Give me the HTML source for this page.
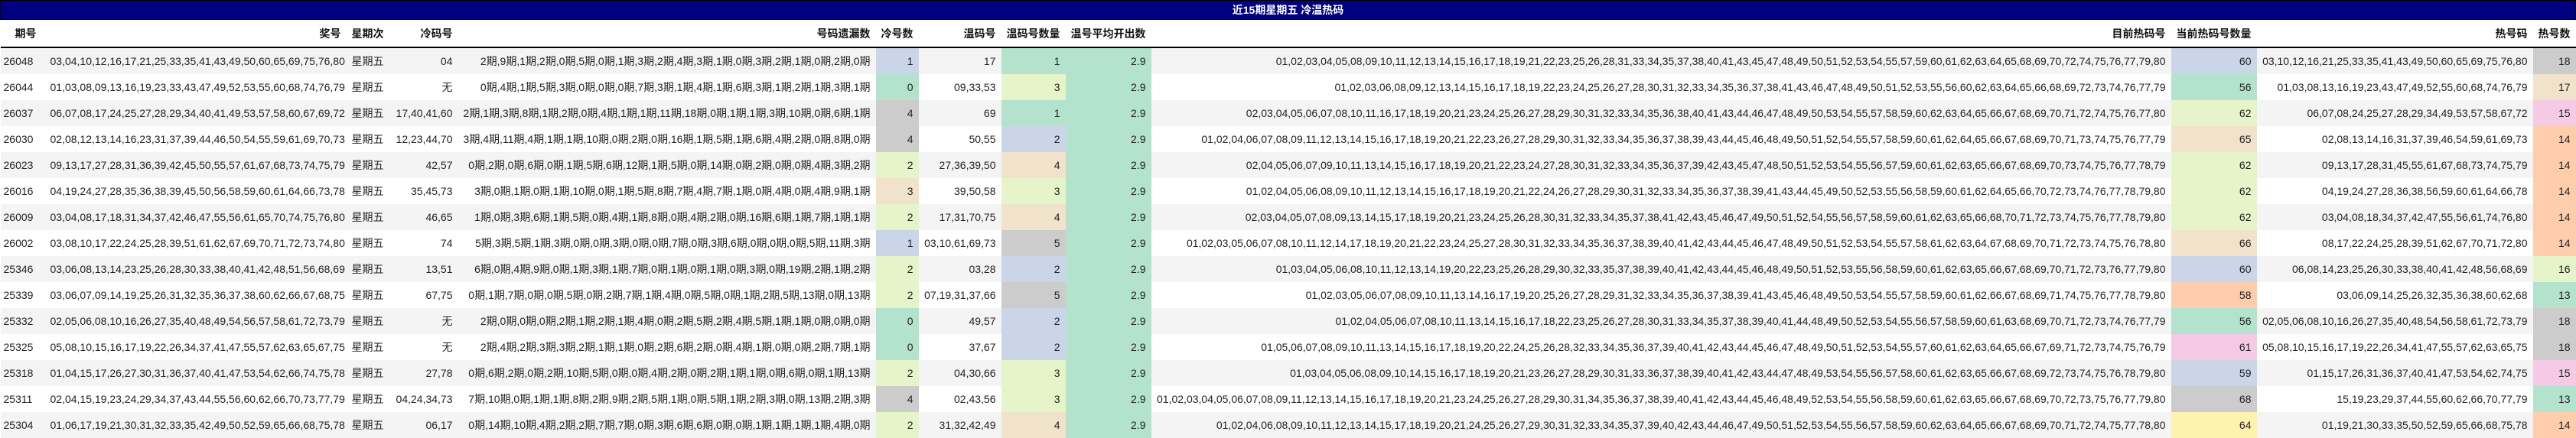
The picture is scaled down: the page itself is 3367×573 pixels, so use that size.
<!DOCTYPE html>
<html><head><meta charset="utf-8">
<style>
html,body{margin:0;padding:0;background:#fff;}
body{width:3367px;height:573px;overflow:hidden;font-family:"Liberation Sans","Noto Sans CJK SC",sans-serif;font-size:14px;color:#222;}
table{border-collapse:collapse;table-layout:fixed;width:3366px;}
td,th{padding:0 7px;white-space:nowrap;overflow:hidden;text-align:right;}
td:nth-child(4),th:nth-child(4){padding-left:0;padding-right:6px;overflow:visible;}
.title td{background:#000080;color:#fff;font-weight:bold;text-align:center;height:24px;border:1px solid #000;padding:0;}
.hd th{height:35px;font-weight:bold;color:#111;border-bottom:2px solid #000;}
tbody tr td{height:34px;}
tbody tr:nth-child(odd) td{background:#f4f4f4;}
td.l,th.l{text-align:left;}
td.c1{padding-left:4px;}
.G{background:#b3e2cd!important}.O{background:#fdcdac!important}.B{background:#cbd5e8!important}.P{background:#f4cae4!important}
.Y{background:#e6f5c9!important}.Z{background:#fff2ae!important}.E{background:#f1e2cc!important}.K{background:#cccccc!important}
</style></head><body>
<table>
<colgroup><col style="width:58px"><col style="width:394px"><col style="width:65px"><col style="width:80px"><col style="width:547px"><col style="width:56px"><col style="width:108px"><col style="width:84px"><col style="width:112px"><col style="width:1333px"><col style="width:112px"><col style="width:361px"><col style="width:56px"></colgroup>
<thead>
<tr class="title"><td colspan="13">近15期星期五 冷温热码</td></tr>
<tr class="hd"><th class="l" style="padding-left:19px">期号</th><th>奖号</th><th class="l">星期次</th><th>冷码号</th><th>号码遗漏数</th><th class="l">冷号数</th><th>温码号</th><th>温码号数量</th><th>温号平均开出数</th><th>目前热码号</th><th>当前热码号数量</th><th>热号码</th><th>热号数</th></tr>
</thead>
<tbody>
<tr><td class="l c1">26048</td><td>03,04,10,12,16,17,21,25,33,35,41,43,49,50,60,65,69,75,76,80</td><td class="l">星期五</td><td>04</td><td>2期,9期,1期,2期,0期,5期,0期,1期,3期,2期,4期,3期,1期,0期,3期,2期,1期,0期,2期,0期</td><td class="B">1</td><td>17</td><td class="G">1</td><td class="G">2.9</td><td>01,02,03,04,05,08,09,10,11,12,13,14,15,16,17,18,19,21,22,23,25,26,28,31,33,34,35,37,38,40,41,43,45,47,48,49,50,51,52,53,54,55,57,59,60,61,62,63,64,65,68,69,70,72,74,75,76,77,79,80</td><td class="B">60</td><td>03,10,12,16,21,25,33,35,41,43,49,50,60,65,69,75,76,80</td><td class="K">18</td></tr>
<tr><td class="l c1">26044</td><td>01,03,08,09,13,16,19,23,33,43,47,49,52,53,55,60,68,74,76,79</td><td class="l">星期五</td><td>无</td><td>0期,4期,1期,5期,3期,0期,0期,0期,7期,3期,1期,4期,1期,6期,3期,1期,2期,1期,3期,1期</td><td class="G">0</td><td>09,33,53</td><td class="Y">3</td><td class="G">2.9</td><td>01,02,03,06,08,09,12,13,14,15,16,17,18,19,22,23,24,25,26,27,28,30,31,32,33,34,35,36,37,38,41,43,46,47,48,49,50,51,52,53,55,56,60,62,63,64,65,66,68,69,72,73,74,76,77,79</td><td class="G">56</td><td>01,03,08,13,16,19,23,43,47,49,52,55,60,68,74,76,79</td><td class="E">17</td></tr>
<tr><td class="l c1">26037</td><td>06,07,08,17,24,25,27,28,29,34,40,41,49,53,57,58,60,67,69,72</td><td class="l">星期五</td><td>17,40,41,60</td><td>2期,1期,3期,8期,1期,2期,0期,4期,1期,1期,11期,18期,0期,1期,1期,3期,10期,0期,6期,1期</td><td class="K">4</td><td>69</td><td class="G">1</td><td class="G">2.9</td><td>02,03,04,05,06,07,08,10,11,16,17,18,19,20,21,23,24,25,26,27,28,29,30,31,32,33,34,35,36,38,40,41,43,44,46,47,48,49,50,53,54,55,57,58,59,60,62,63,64,65,66,67,68,69,70,71,72,74,75,76,77,80</td><td class="Y">62</td><td>06,07,08,24,25,27,28,29,34,49,53,57,58,67,72</td><td class="P">15</td></tr>
<tr><td class="l c1">26030</td><td>02,08,12,13,14,16,23,31,37,39,44,46,50,54,55,59,61,69,70,73</td><td class="l">星期五</td><td>12,23,44,70</td><td>3期,4期,11期,4期,1期,1期,10期,0期,2期,0期,16期,1期,5期,1期,6期,4期,2期,0期,8期,0期</td><td class="K">4</td><td>50,55</td><td class="B">2</td><td class="G">2.9</td><td>01,02,04,06,07,08,09,11,12,13,14,15,16,17,18,19,20,21,22,23,26,27,28,29,30,31,32,33,34,35,36,37,38,39,43,44,45,46,48,49,50,51,52,54,55,57,58,59,60,61,62,64,65,66,67,68,69,70,71,73,74,75,76,77,79</td><td class="E">65</td><td>02,08,13,14,16,31,37,39,46,54,59,61,69,73</td><td class="O">14</td></tr>
<tr><td class="l c1">26023</td><td>09,13,17,27,28,31,36,39,42,45,50,55,57,61,67,68,73,74,75,79</td><td class="l">星期五</td><td>42,57</td><td>0期,2期,0期,6期,0期,1期,5期,6期,12期,1期,5期,0期,14期,0期,2期,0期,0期,4期,3期,2期</td><td class="Y">2</td><td>27,36,39,50</td><td class="E">4</td><td class="G">2.9</td><td>02,04,05,06,07,09,10,11,13,14,15,16,17,18,19,20,21,22,23,24,27,28,30,31,32,33,34,35,36,37,39,42,43,45,47,48,50,51,52,53,54,55,56,57,59,60,61,62,63,65,66,67,68,69,70,73,74,75,76,77,78,79</td><td class="Y">62</td><td>09,13,17,28,31,45,55,61,67,68,73,74,75,79</td><td class="O">14</td></tr>
<tr><td class="l c1">26016</td><td>04,19,24,27,28,35,36,38,39,45,50,56,58,59,60,61,64,66,73,78</td><td class="l">星期五</td><td>35,45,73</td><td>3期,0期,1期,0期,1期,10期,0期,1期,5期,8期,7期,4期,7期,1期,0期,4期,0期,4期,9期,1期</td><td class="E">3</td><td>39,50,58</td><td class="Y">3</td><td class="G">2.9</td><td>01,02,04,05,06,08,09,10,11,12,13,14,15,16,17,18,19,20,21,22,24,26,27,28,29,30,31,32,33,34,35,36,37,38,39,41,43,44,45,49,50,52,53,55,56,58,59,60,61,62,64,65,66,70,72,73,74,76,77,78,79,80</td><td class="Y">62</td><td>04,19,24,27,28,36,38,56,59,60,61,64,66,78</td><td class="O">14</td></tr>
<tr><td class="l c1">26009</td><td>03,04,08,17,18,31,34,37,42,46,47,55,56,61,65,70,74,75,76,80</td><td class="l">星期五</td><td>46,65</td><td>1期,0期,3期,6期,1期,5期,0期,4期,1期,8期,0期,4期,2期,0期,16期,6期,1期,7期,1期,1期</td><td class="Y">2</td><td>17,31,70,75</td><td class="E">4</td><td class="G">2.9</td><td>02,03,04,05,07,08,09,13,14,15,17,18,19,20,21,23,24,25,26,28,30,31,32,33,34,35,37,38,41,42,43,45,46,47,49,50,51,52,54,55,56,57,58,59,60,61,62,63,65,66,68,70,71,72,73,74,75,76,77,78,79,80</td><td class="Y">62</td><td>03,04,08,18,34,37,42,47,55,56,61,74,76,80</td><td class="O">14</td></tr>
<tr><td class="l c1">26002</td><td>03,08,10,17,22,24,25,28,39,51,61,62,67,69,70,71,72,73,74,80</td><td class="l">星期五</td><td>74</td><td>5期,3期,5期,1期,3期,0期,0期,3期,0期,0期,7期,0期,3期,6期,0期,0期,0期,5期,11期,3期</td><td class="B">1</td><td>03,10,61,69,73</td><td class="K">5</td><td class="G">2.9</td><td>01,02,03,05,06,07,08,10,11,12,14,17,18,19,20,21,22,23,24,25,27,28,30,31,32,33,34,35,36,37,38,39,40,41,42,43,44,45,46,47,48,49,50,51,52,53,54,55,57,58,61,62,63,64,67,68,69,70,71,72,73,74,75,76,78,80</td><td class="E">66</td><td>08,17,22,24,25,28,39,51,62,67,70,71,72,80</td><td class="O">14</td></tr>
<tr><td class="l c1">25346</td><td>03,06,08,13,14,23,25,26,28,30,33,38,40,41,42,48,51,56,68,69</td><td class="l">星期五</td><td>13,51</td><td>6期,0期,4期,9期,0期,1期,3期,1期,7期,0期,1期,0期,1期,0期,3期,0期,19期,2期,1期,2期</td><td class="Y">2</td><td>03,28</td><td class="B">2</td><td class="G">2.9</td><td>01,03,04,05,06,08,10,11,12,13,14,19,20,22,23,25,26,28,29,30,32,33,35,37,38,39,40,41,42,43,44,45,46,48,49,50,51,52,53,55,56,58,59,60,61,62,63,65,66,67,68,69,70,71,72,73,76,77,79,80</td><td class="B">60</td><td>06,08,14,23,25,26,30,33,38,40,41,42,48,56,68,69</td><td class="Y">16</td></tr>
<tr><td class="l c1">25339</td><td>03,06,07,09,14,19,25,26,31,32,35,36,37,38,60,62,66,67,68,75</td><td class="l">星期五</td><td>67,75</td><td>0期,1期,7期,0期,0期,5期,0期,2期,7期,1期,4期,0期,5期,0期,1期,2期,5期,13期,0期,13期</td><td class="Y">2</td><td>07,19,31,37,66</td><td class="K">5</td><td class="G">2.9</td><td>01,02,03,05,06,07,08,09,10,11,13,14,16,17,19,20,25,26,27,28,29,31,32,33,34,35,36,37,38,39,41,43,45,46,48,49,50,53,54,55,57,58,59,60,61,62,66,67,68,69,71,74,75,76,77,78,79,80</td><td class="O">58</td><td>03,06,09,14,25,26,32,35,36,38,60,62,68</td><td class="G">13</td></tr>
<tr><td class="l c1">25332</td><td>02,05,06,08,10,16,26,27,35,40,48,49,54,56,57,58,61,72,73,79</td><td class="l">星期五</td><td>无</td><td>2期,0期,0期,0期,2期,1期,2期,1期,4期,0期,2期,5期,2期,4期,5期,1期,1期,0期,0期,0期</td><td class="G">0</td><td>49,57</td><td class="B">2</td><td class="G">2.9</td><td>01,02,04,05,06,07,08,10,11,13,14,15,16,17,18,22,23,25,26,27,28,30,31,33,34,35,37,38,39,40,41,44,48,49,50,52,53,54,55,56,57,58,59,60,61,63,68,69,70,71,72,73,74,76,77,79</td><td class="G">56</td><td>02,05,06,08,10,16,26,27,35,40,48,54,56,58,61,72,73,79</td><td class="K">18</td></tr>
<tr><td class="l c1">25325</td><td>05,08,10,15,16,17,19,22,26,34,37,41,47,55,57,62,63,65,67,75</td><td class="l">星期五</td><td>无</td><td>2期,4期,2期,3期,3期,2期,1期,1期,0期,2期,6期,2期,0期,4期,1期,0期,0期,2期,7期,1期</td><td class="G">0</td><td>37,67</td><td class="B">2</td><td class="G">2.9</td><td>01,05,06,07,08,09,10,11,13,14,15,16,17,18,19,20,22,24,25,26,28,32,33,34,35,36,37,39,40,41,42,43,44,45,46,47,48,49,50,51,52,53,54,55,57,60,61,62,63,64,65,66,67,69,71,72,73,74,75,76,79</td><td class="P">61</td><td>05,08,10,15,16,17,19,22,26,34,41,47,55,57,62,63,65,75</td><td class="K">18</td></tr>
<tr><td class="l c1">25318</td><td>01,04,15,17,26,27,30,31,36,37,40,41,47,53,54,62,66,74,75,78</td><td class="l">星期五</td><td>27,78</td><td>0期,6期,2期,0期,2期,10期,5期,0期,0期,4期,2期,0期,2期,1期,1期,0期,6期,0期,1期,13期</td><td class="Y">2</td><td>04,30,66</td><td class="Y">3</td><td class="G">2.9</td><td>01,03,04,05,06,08,09,10,14,15,16,17,18,19,20,21,23,26,27,28,29,30,31,33,36,37,38,39,40,41,42,43,44,47,48,49,53,54,55,56,57,58,60,61,62,63,65,66,67,68,69,72,73,74,75,76,78,79,80</td><td class="B">59</td><td>01,15,17,26,31,36,37,40,41,47,53,54,62,74,75</td><td class="P">15</td></tr>
<tr><td class="l c1">25311</td><td>02,04,15,19,23,24,29,34,37,43,44,55,56,60,62,66,70,73,77,79</td><td class="l">星期五</td><td>04,24,34,73</td><td>7期,10期,0期,1期,1期,8期,2期,9期,2期,5期,1期,0期,5期,1期,2期,3期,0期,13期,2期,3期</td><td class="K">4</td><td>02,43,56</td><td class="Y">3</td><td class="G">2.9</td><td>01,02,03,04,05,06,07,08,09,11,12,13,14,15,16,17,18,19,20,21,23,24,25,26,27,28,29,30,31,34,35,36,37,38,39,40,41,42,43,44,45,46,48,49,52,53,54,55,56,58,59,60,61,62,63,65,66,67,68,69,70,72,73,75,76,77,79,80</td><td class="K">68</td><td>15,19,23,29,37,44,55,60,62,66,70,77,79</td><td class="G">13</td></tr>
<tr><td class="l c1">25304</td><td>01,06,17,19,21,30,31,32,33,35,42,49,50,52,59,65,66,68,75,78</td><td class="l">星期五</td><td>06,17</td><td>0期,14期,10期,4期,2期,2期,7期,7期,0期,3期,6期,6期,0期,0期,1期,1期,1期,1期,4期,0期</td><td class="Y">2</td><td>31,32,42,49</td><td class="E">4</td><td class="G">2.9</td><td>01,02,04,06,08,09,10,11,12,13,14,15,17,18,19,20,21,24,25,26,27,29,30,31,32,33,34,35,37,39,40,42,43,44,46,47,49,50,51,52,53,54,55,56,57,58,59,60,62,63,64,65,66,67,68,69,70,71,72,74,75,77,78,80</td><td class="Z">64</td><td>01,19,21,30,33,35,50,52,59,65,66,68,75,78</td><td class="O">14</td></tr>
</tbody>
</table>
</body></html>
